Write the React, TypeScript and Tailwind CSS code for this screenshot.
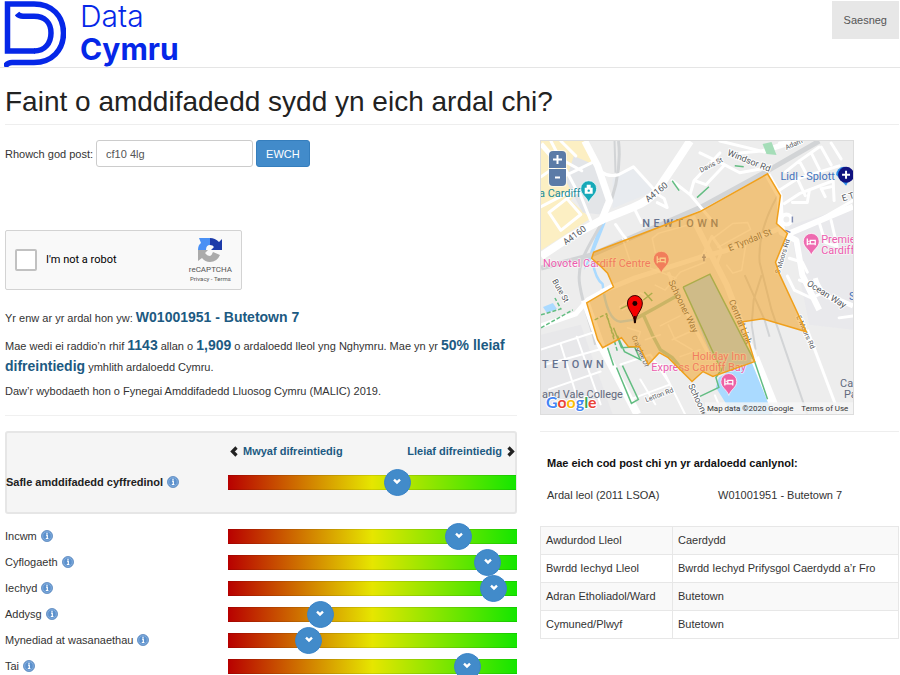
import React from "react";

const SANS = "font-['Liberation_Sans',Arial,sans-serif]";

function Logo() {
  return (
    <a href="#" aria-label="Data Cymru" className="flex gap-[14px] text-[#0527e8] no-underline">
      <svg width="62" height="67" viewBox="0 0 62 67" fill="none" stroke="currentColor" strokeWidth="5.500">
        <path d="M31 51H3.500V4H30C48 4 59.500 16 59.500 33S48 62.500 30 62.500H8Q3 62.500 1 67" />
        <path d="M13 13.500Q15 16.200 19 16.200H30C41 16.200 47 23 47 33S41 51 30 51" />
      </svg>
      <span className="flex flex-col font-['Inter',sans-serif] text-[30px] leading-[33px]">
        <span className="font-light">Data</span>
        <span className="font-bold">Cymru</span>
      </span>
    </a>
  );
}

function InfoIcon() {
  return (
    <svg width="12" height="12" viewBox="0 0 12 12" className="shrink-0" role="img" aria-label="Gwybodaeth">
      <circle cx="6" cy="6" r="5.500" fill="#5b90cc" stroke="#6c95c6" />
      <circle cx="6" cy="6" r="4.300" fill="none" stroke="#8db5e2" strokeWidth=".8" />
      <path d="M5 5.200h1.300v3M4.800 8.500h2.600M6 2.800v1.200" stroke="#fff" strokeWidth="1.200" fill="none" />
    </svg>
  );
}

function Chevron({ dir, className }: { dir: "left" | "right" | "down"; className?: string }) {
  const d = { left: "M7.500 1.500 3.500 5.500 7.500 9.500", right: "M2.500 1.500 6.500 5.500 2.500 9.500", down: "M2 3.200 5 6 8 3.200" }[dir];
  return (
    <svg width="10" height="11" viewBox="0 0 10 11" className={className} aria-hidden="true">
      <path d={d} fill="none" stroke="currentColor" strokeWidth={dir === "down" ? 2.4 : 3.2} />
    </svg>
  );
}

function Scale({ id, value }: { id: string; value: number }) {
  return (
    <div className="relative flex h-[15px] flex-1 items-center border-y border-black/10 bg-[linear-gradient(to_right,#b80000,#e6e600_50%,#14e600)]">
      <input
        id={id}
        type="range"
        min={0}
        max={1000}
        defaultValue={value}
        className="m-0 -my-2 block h-[27px] w-full appearance-none bg-transparent [&::-webkit-slider-thumb]:size-[27px] [&::-webkit-slider-thumb]:appearance-none [&::-webkit-slider-thumb]:rounded-full [&::-webkit-slider-thumb]:border [&::-webkit-slider-thumb]:border-[#3a84c8] [&::-webkit-slider-thumb]:bg-[#428bca]"
      />
      <span
        className="pointer-events-none absolute top-1/2 -translate-x-1/2 -translate-y-1/2 text-white"
        style={{ left: `calc(13.5px + (100% - 27px) * ${value / 1000})` }}
      >
        <Chevron dir="down" />
      </span>
    </div>
  );
}

const domains = [
  { id: "incwm", label: "Incwm", value: 829 },
  { id: "cyflogaeth", label: "Cyflogaeth", value: 940 },
  { id: "iechyd", label: "Iechyd", value: 962 },
  { id: "addysg", label: "Addysg", value: 300 },
  { id: "mynediad", label: "Mynediad at wasanaethau", value: 256 },
  { id: "tai", label: "Tai", value: 862 },
];

const areas = [
  ["Awdurdod Lleol", "Caerdydd"],
  ["Bwrdd Iechyd Lleol", "Bwrdd Iechyd Prifysgol Caerdydd a’r Fro"],
  ["Adran Etholiadol/Ward", "Butetown"],
  ["Cymuned/Plwyf", "Butetown"],
];

function Pin({ x, y, color, children }: { x: number; y: number; color: string; children?: React.ReactNode }) {
  return (
    <g transform={`translate(${x} ${y})`}>
      <path d="M0 13C-2 7-8 5-8-1A8 8 0 0 1 8-1C8 5 2 7 0 13Z" fill={color} stroke="#fff" strokeWidth=".7" />
      {children ?? (
        <path d="M-4-4V3M-4 1.500H4V3M4 1V-2H-1V1M-3-1H-2" stroke="#fff" strokeWidth="1.300" fill="none" />
      )}
    </g>
  );
}

function AreaMap() {
  return (
    <div className="relative h-[275px] w-[314px] max-w-full overflow-hidden border border-[#dddddd]">
      <svg viewBox="540 140 314 275" preserveAspectRatio="xMinYMin slice" className="block size-full" role="img" aria-label="Map Butetown">
        <rect x="540" y="140" width="314" height="275" fill="#ededed" />
        <path d="M540 140H584L596 163 570 200 590 218 540 250Z" fill="#fcefc3" />
        <path d="M573 155 596 165 605 200 600 214 582 212 565 180Z" fill="#e3e5e8" />
        <path d="M612 178 632 167 655 190 612 208Z" fill="#e8ebef" />
        <path d="M540 335 580 325 612 415H540Z" fill="#e8e8ea" />
        <path d="M790 225 854 205V330L810 325Z" fill="#e9e9ec" />

        <g fill="#aadaff">
          <path d="M683 287 710 274 755 362 770 403 775 415H733L716 388 719 378 726 374 710 352Z" />
          <path d="M600 222 606 220 590 260 583 270Z" />
          <path d="M542 307 552 303 556 309 546 313Z" />
        </g>
        <path d="M592 262Q595 279 602 284Q606 320 620 322L633 320" stroke="#aadaff" strokeWidth="2.500" fill="none" />
        <path d="M633 320 655 308 680 294M643 315 652 335 660 350 672 358 684 372" stroke="#a3cdb9" strokeWidth="3.500" fill="none" />

        <g fill="none" stroke="#d2d4d6" strokeWidth="3">
          <path d="M618 140Q622 175 605 215C590 245 575 260 579 285S591 325 595 345" />
          <path d="M540 268 590 255 700 207 768 170 820 140" strokeWidth="5" />
          <path d="M614 140 615 172M778 195Q758 230 760 262L772 310 808 415" strokeWidth="2" />
          <path d="M762 275 754 300 752 325 756 350M745 275 765 320 770 337" strokeWidth="2" />
        </g>

        <g fill="none" stroke="#fff" strokeWidth="3" strokeLinecap="round" strokeLinejoin="round">
          <path d="M540 176 563 160 581 170M550 140 575 188 540 206M560 140 575 155M558 178 595 160M548 212 566 198 580 214 560 230 548 212M566 198 578 190 590 220" />
          <path d="M595 162Q601 178 618 174L633 166 655 190M634 208 641 222M655 192 664 198 667 207 657 202M615 224 622 234 627 240" />
          <path d="M672 180 690 194 712 220M690 194 694 180 720 152M700 152 725 164 706 184 695 180M725 164 740 172 762 168M740 152 762 150 790 140" />
          <path d="M720 140 765 151 790 143M786 171 800 160 820 146M800 160 808 175M812 152 820 168M822 146 832 164M832 142 842 158M779 190 798 178 840 165M785 203 800 193 834 180 835 200M798 178 806 195M826 196 822 188 832 186" />
          <path d="M790 233 812 224 854 200M793 202 808 202 810 190M820 222 826 242 838 246 832 220M790 258 803 262 808 272" />
          <path d="M780 142 800 140M800 280 820 288 835 300M788 276 795 290 812 298 825 292M840 318 854 316" />
          <path d="M540 350 595 332M545 365 605 348M548 390 600 372M560 345 580 410M576 337 600 405M620 365 650 355 670 385 630 400M640 380 655 405M660 365 685 415M715 396 723 415" strokeWidth="2" />
        </g>
        <g fill="none" stroke="#fff" strokeWidth="1.500" strokeLinecap="round" strokeLinejoin="round" opacity=".75">
          <path d="M655 252 652 238 658 233 697 222M622 238 632 268M713 238 733 223 748 222 751 229 718 247M727 265 733 273 742 270 746 245" />
          <path d="M619 307 640 293 647 296 622 310ZM650 268 676 278M655 285 665 290 680 272 705 262" />
          <path d="M660 326 680 316M627 328 640 332 636 345M645 340 660 335M672 340 690 332M668 325 675 340 692 350M680 357 700 350" />
        </g>
        <g fill="none" stroke="#fff" strokeLinejoin="round">
          <path d="M540 256 570 236 602 219 632 207Q650 200 658 188L675 163 690 140" strokeWidth="8" />
          <path d="M584 140 597 165 609 200 600 222" strokeWidth="7" />
          <path d="M540 326 575 314 587 300 614 285" strokeWidth="5" />
          <path d="M584 300 600 345 637 415" strokeWidth="8" />
          <path d="M768 174 780 195 782 232 797 240 803 275 820 310M785 235 854 206" strokeWidth="6" />
          <path d="M755 358 778 415" strokeWidth="9" />
          <path d="M808 330 840 415" strokeWidth="3" />
          <path d="M540 143 555 160M816 278Q822 298 840 300L854 306" strokeWidth="5" />
        </g>
        <g fill="none" stroke="#fff" strokeLinejoin="round" opacity=".8">
          <path d="M600 292 634 278 700 257 727 250 785 226" strokeWidth="5" />
          <path d="M692 216 710 252 727 285 755 358" strokeWidth="6" />
          <path d="M668 272 680 300 710 357" strokeWidth="3.500" />
          <path d="M703 255 712 236 722 250 716 266" strokeWidth="3" />
        </g>
        <circle cx="787" cy="219" r="5" fill="#ededed" stroke="#fff" strokeWidth="4" />
        <path d="M704 254V261M702 257H706M793 216V222M786 230 791 232" stroke="#7f8bb3" strokeWidth="1.500" />

        <g fill="none" stroke="#63bd82" strokeWidth="1.500">
          <path d="M540 315 560 309 554 298M540 328 572 310M594 320 606 314 617 352M606 316 614 338" strokeDasharray="4 2" />
          <path d="M613 328 621 348 637 347M617 336 624 352 640 360 634 347M616 368 631 404 638 400 622 366M607 348 613 366" />
          <path d="M683 287 722 372M683 287 710 274 755 362 768 400M724 367 716 378 719 388 700 397" />
          <path d="M644 292 652 301M652 293 643 300M620 309 628 305M735 165 744 166M697 197 709 186M672 180 679 190" />
        </g>
        <path d="M763 143 772 141 777 154 767 153Z" fill="#a5ddb8" />

        <g className="font-[Roboto,sans-serif]" fontSize="9" fill="#54585d" stroke="#fff" strokeWidth="2" paintOrder="stroke" strokeLinejoin="round">
          <text transform="translate(565 245) rotate(-36)">A4160</text>
          <text transform="translate(648 202) rotate(-39)">A4160</text>
          <text transform="translate(727 154) rotate(22)">Windsor Rd</text>
          <text transform="translate(701 172) rotate(-27)" fontSize="7">Davis St</text>
          <text transform="translate(787 149) rotate(-24)" fontSize="7">Adam</text>
          <text transform="translate(551 281) rotate(60)" fontSize="8">Bute St</text>
          <text transform="translate(844 201) rotate(-18)">E Tyndall St</text>
          <text transform="translate(807 285) rotate(32)">Ocean Way</text>
          <text transform="translate(797 317) rotate(66)" fontSize="7">E Moors Rd</text>
          <text transform="translate(780 274) rotate(-73)" fontSize="7">S Moors Rd</text>
          <text transform="translate(688 386) rotate(65)">Schooner Way</text>
          <text transform="translate(646 403) rotate(-21)" fontSize="7">Letton Rd</text>
        </g>
        <g className="font-[Roboto,sans-serif]" fontSize="9" fill="#54585d">
          <text transform="translate(631 337) rotate(66)" fontSize="7">Craiglee Dr</text>
          <text transform="translate(730 251) rotate(-22)">E Tyndall St</text>
          <text transform="translate(668 282) rotate(64)">Schooner Way</text>
          <text transform="translate(729 301) rotate(68)">Central Link</text>
        </g>
        <g className="font-[Roboto,sans-serif]" fontSize="11" fill="#626a7d">
          <text x="642" y="227" letterSpacing="3.500" fontWeight="500" fill="#65728f">NEWTOWN</text>
          <text x="541" y="368" letterSpacing="3.500" fontWeight="500" fill="#65728f">TETOWN</text>
          <text x="541" y="399">and Vale College</text>
          <text x="841" y="388">Ca</text>
          <text x="845" y="399">Pa</text>
          <text x="538" y="196" fill="#168a98">a Cardiff</text>
          <text x="781" y="179" fill="#4373bd">Lidl - Splott</text>
          <text x="850" y="300" fill="#4373bd">S</text>
        </g>
        <g className="font-[Roboto,sans-serif]" fontSize="11" fill="#ec5cae" stroke="#fff" strokeOpacity=".6" strokeWidth="1.500" paintOrder="stroke">
          <text x="542" y="267">Novotel Cardiff Centre</text>
          <text x="822" y="243">Premier</text>
          <text x="822" y="254">Cardiff</text>
          <text x="692" y="360">Holiday Inn</text>
          <text x="651" y="371">Express Cardiff Bay</text>
        </g>
        <Pin x={588} y={189} color="#17a9b8">
          <path d="M-4-2H4V4H-4ZM-2-5H2V-2H-2Z" fill="#fff" />
          <circle cy="1" r="1.200" fill="#17a9b8" />
        </Pin>
        <Pin x={661} y={260} color="#ee61a5" />
        <Pin x={812} y={242} color="#ee6bb0" />
        <path d="M837 174A8 8 0 0 1 853 174L847 185Z" fill="#2f8fe8" />

        <path
          d="M593 252 700 211 768 173 781 195 777 223 788 233 776 262 780 274 807 332 763 319 743 322 755 362 713 377 703 372 692 382 668 358 659 353 648 365 639 347 628 347 621 338 602 348 597 340 586 303 613 287 607 273 601 267 591 258Z"
          fill="#f39c12"
          fillOpacity=".5"
          stroke="#f0a01c"
          strokeWidth="1.500"
        />
        <Pin x={729} y={383} color="#ee61a5" />
        <circle cx="847" cy="174" r="8" fill="#101280" />
        <path d="M847 170V178M843 174H851" stroke="#fff" strokeWidth="2" />

        <path d="M634 323C634 314 627 311 627 303A7.500 7.500 0 0 1 642 303C642 311 635 314 635 323Z" fill="#f50000" stroke="#3a0000" />
        <path d="M634.500 316V323" stroke="#000" strokeWidth="1.500" />
        <circle cx="634.500" cy="303.500" r="2.500" fill="#1b0000" />

        <rect x="705" y="403" width="149" height="12" fill="#f5f5f5" fillOpacity=".8" />
        <g className="font-[Roboto,sans-serif]" fontSize="8" fill="#333">
          <text x="707" y="412">Map data ©2020 Google</text>
          <text x="802" y="412">Terms of Use</text>
        </g>
        <text x="545" y="409" className="font-[Lato,sans-serif]" fontSize="16" fontWeight="700" stroke="#fff" strokeWidth="2" paintOrder="stroke">
          <tspan fill="#4285f4">G</tspan>
          <tspan fill="#ea4335">o</tspan>
          <tspan fill="#fbbc05">o</tspan>
          <tspan fill="#4285f4">g</tspan>
          <tspan fill="#34a853">l</tspan>
          <tspan fill="#ea4335">e</tspan>
        </text>
      </svg>
      <div className="absolute left-[7px] top-[9px] flex flex-col gap-px rounded-sm bg-white/50 p-px">
        <button aria-label="Zoom in" className="flex size-[17px] items-center justify-center rounded-t-sm bg-[#5b7ba7] text-white">
          <svg width="9" height="9" viewBox="0 0 9 9" stroke="currentColor" strokeWidth="2"><path d="M4.500 0V9M0 4.500H9" /></svg>
        </button>
        <button aria-label="Zoom out" className="flex size-[17px] items-center justify-center rounded-b-sm bg-[#5b7ba7] text-white">
          <svg width="9" height="9" viewBox="0 0 9 9" stroke="currentColor" strokeWidth="2"><path d="M2 4.500H7" /></svg>
        </button>
      </div>
    </div>
  );
}

function Captcha() {
  return (
    <div className="flex h-[60px] w-[237px] items-center rounded-[2px] border border-[#d3d3d3] bg-[#f9f9f9] px-[9px] font-[Roboto,sans-serif]">
      <input id="robot" type="checkbox" className="m-0 size-[22px] appearance-none rounded-[2px] border-2 border-[#c1c1c1] bg-white" />
      <label htmlFor="robot" className="ml-[9px] flex-1 text-[11px] text-black">I'm not a robot</label>
      <div className="flex flex-col items-center text-[#555]">
        <svg width="26" height="26" viewBox="0 0 26 26" aria-hidden="true">
          <path d="M13 1V8Q9 8 9 13H1Q1 8 4 6L2 1Z" fill="#4a90f4" />
          <path d="M13 1Q18 1 22 5L25 2V13H14L17 10Q16 8 13 8Z" fill="#1c3aa9" />
          <path d="M1 13H11L8 16Q10 19 13 19Q15 18 16 15L23 18Q20 25 13 25Q8 25 5 21L1 24Z" fill="#ababab" />
        </svg>
        <span className="mt-px text-[8px] leading-[11px]">reCAPTCHA</span>
        <span className="text-[6px] leading-[8px]"><a href="#">Privacy</a> - <a href="#">Terms</a></span>
      </div>
    </div>
  );
}

function Strong({ children }: { children: React.ReactNode }) {
  return <strong className="text-[14px] leading-none font-bold text-[#1c5a82]">{children}</strong>;
}

export default function App() {
  return (
    <div className={`min-h-screen bg-white text-[11px] leading-4 text-[#333] ${SANS}`}>
      <header className="flex h-[68px] items-start justify-between border-b border-[#e5e5e5] pl-1 pr-px">
        <Logo />
        <button className="mt-px h-[38px] bg-[#e7e7e7] px-3 text-[11px] text-[#555]">Saesneg</button>
      </header>
      <main className="pl-[5px] pr-px">
        <h1 className="mb-[15px] flex h-[57px] items-center border-b border-[#eee] pt-3 text-[28px] leading-8 text-[#222]">
          Faint o amddifadedd sydd yn eich ardal chi?
        </h1>
        <div className="grid grid-cols-[512fr_359fr] items-start gap-x-[23px]">
          <section>
            <form className="flex items-center gap-[3px]">
              <label htmlFor="postcode">Rhowch god post:</label>
              <input id="postcode" type="text" defaultValue="cf10 4lg" className="h-[27px] w-[157px] rounded-[3px] border border-[#ccc] bg-white px-[9px] text-[11px] text-[#555]" />
              <button type="button" className="h-[27px] rounded-[3px] border border-[#357ebd] bg-[#428bca] px-[9px] text-[11px] text-white">EWCH</button>
            </form>
            <div className="mt-[63px]"><Captcha /></div>
            <p className="mt-[18px] leading-[21px]">Yr enw ar yr ardal hon yw: <Strong>W01001951 - Butetown 7</Strong></p>
            <p className="mt-[7px] leading-[21px]">
              Mae wedi ei raddio’n rhif <Strong>1143</Strong> allan o <Strong>1,909</Strong> o ardaloedd lleol yng Nghymru. Mae yn yr <Strong>50% lleiaf difreintiedig</Strong> ymhlith ardaloedd Cymru.
            </p>
            <p className="mt-[5px]">Daw’r wybodaeth hon o Fynegai Amddifadedd Lluosog Cymru (MALIC) 2019.</p>
            <hr className="mt-4 border-[#f0f0f0]" />

            <div className="mt-[15px] h-[83px] rounded-[3px] border-2 border-[#e6e6e6] bg-[#f5f5f5] pt-[10px]">
              <div className="-mr-px ml-[222px] flex items-center justify-between font-bold leading-4 text-[#1c5a82]">
                <span className="flex items-center gap-1"><Chevron dir="left" className="text-[#222]" />Mwyaf difreintiedig</span>
                <span className="flex items-center gap-1">Lleiaf difreintiedig<Chevron dir="right" className="text-[#222]" /></span>
              </div>
              <div className="-mx-px mt-[15px] flex h-4 items-center">
                <label htmlFor="overall" className="flex w-[222px] items-center gap-1 font-bold text-[#222]">Safle amddifadedd cyffredinol <InfoIcon /></label>
                <Scale id="overall" value={596} />
              </div>
            </div>
            <div className="mt-[9px]">
              {domains.map((d) => (
                <div key={d.id} className="flex h-[26px] items-center">
                  <label htmlFor={d.id} className="flex w-[223px] items-center gap-1">{d.label} <InfoIcon /></label>
                  <Scale id={d.id} value={d.value} />
                </div>
              ))}
            </div>
          </section>

          <section>
            <AreaMap />
            <hr className="mt-4 border-[#eee]" />
            <div className="px-[7px]">
              <h2 className="mt-[23px] text-[11px] font-bold text-[#111]">Mae eich cod post chi yn yr ardaloedd canlynol:</h2>
              <dl className="mt-4 flex">
                <dt className="w-[171px]">Ardal leol (2011 LSOA)</dt>
                <dd>W01001951 - Butetown 7</dd>
              </dl>
            </div>
            <table className="mt-[23px] w-full border-collapse leading-[15px]">
              <tbody>
                {areas.map(([k, v]) => (
                  <tr key={k} className="odd:bg-[#f9f9f9]">
                    <th scope="row" className="w-[132px] border border-[#e7e7e7] px-[5px] py-[6px] text-left font-normal">{k}</th>
                    <td className="border border-[#e7e7e7] px-[5px] py-[6px]">{v}</td>
                  </tr>
                ))}
              </tbody>
            </table>
          </section>
        </div>
      </main>
    </div>
  );
}
